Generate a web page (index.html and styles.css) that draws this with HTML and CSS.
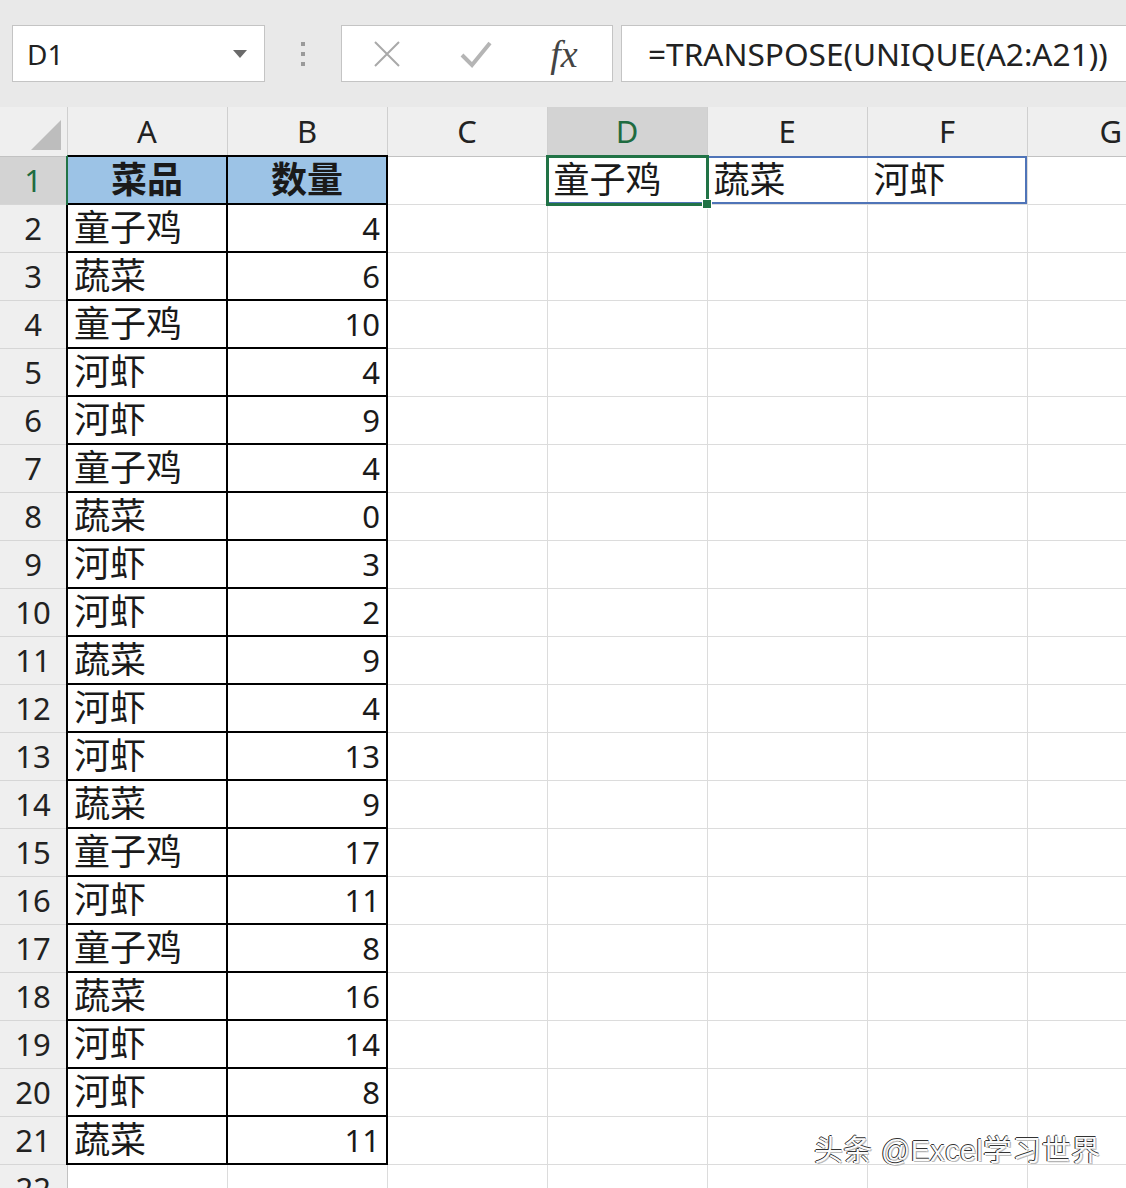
FILE: index.html
```html
<!DOCTYPE html>
<html lang="zh-CN">
<head>
    <meta charset="UTF-8">
    <title>TRANSPOSE UNIQUE</title>
    <link rel="stylesheet" href="styles.css">
</head>
<body>
<div class="toolbar">
    <div class="name-box">
        <span>D1</span>
        <span class="caret"></span>
    </div>
    <div class="grip"><i></i><i></i><i></i></div>
    <div class="fx-buttons">
        <svg class="btn-cancel" width="28" height="28" viewBox="0 0 28 28">
            <path d="M2 2 L26 26 M26 2 L2 26" stroke="#a9a9a9" stroke-width="2" fill="none"/>
        </svg>
        <svg class="btn-enter" width="32" height="28" viewBox="0 0 32 28">
            <path d="M2 15 L12 25 L30 3" stroke="#b5b5b5" stroke-width="4" fill="none"/>
        </svg>
        <span class="fx">fx</span>
    </div>
    <div class="formula">=TRANSPOSE(UNIQUE(A2:A21))</div>
</div>

<div class="sheet">
    <table class="grid">
        <colgroup>
            <col class="col-head">
            <col class="col"><col class="col"><col class="col">
            <col class="col"><col class="col"><col class="col">
            <col class="col-last">
        </colgroup>
        <thead>
        <tr>
            <th class="corner"><span class="corner-tri"></span></th>
            <th>A</th><th>B</th><th>C</th>
            <th class="active">D</th><th>E</th><th>F</th><th class="last">G</th>
        </tr>
        </thead>
        <tbody id="rows">
        <tr>
            <th class="row-no active">1</th>
            <td class="data title">菜品</td>
            <td class="data title">数量</td>
            <td></td>
            <td class="pick">
                <div class="spill"></div>
                <div class="cursor"><span class="handle"></span></div>
                童子鸡
            </td>
            <td class="spilled">蔬菜</td>
            <td class="spilled">河虾</td>
            <td></td>
        </tr>
        </tbody>
    </table>
    <div class="watermark">头条 @Excel学习世界</div>
</div>

<script>
    // 原始数据 A2:B21
    const rows = [
        ['童子鸡', 4], ['蔬菜', 6], ['童子鸡', 10], ['河虾', 4], ['河虾', 9],
        ['童子鸡', 4], ['蔬菜', 0], ['河虾', 3], ['河虾', 2], ['蔬菜', 9],
        ['河虾', 4], ['河虾', 13], ['蔬菜', 9], ['童子鸡', 17], ['河虾', 11],
        ['童子鸡', 8], ['蔬菜', 16], ['河虾', 14], ['河虾', 8], ['蔬菜', 11]
    ];

    const body = document.getElementById('rows');
    let html = '';
    rows.forEach((r, i) => {
        html += `<tr><th class="row-no">${i + 2}</th>` +
            `<td class="data">${r[0]}</td><td class="data num">${r[1]}</td>` +
            '<td></td><td></td><td></td><td></td><td></td></tr>';
    });
    // 第22行只露出一半
    html += '<tr><th class="row-no">22</th><td></td><td></td><td></td><td></td><td></td><td></td><td></td></tr>';
    body.insertAdjacentHTML('beforeend', html);
</script>
</body>
</html>
```

FILE: styles.css
```css
html, body {
    margin: 0;
    padding: 0;
}
body {
    width: 1126px;
    height: 1188px;
    overflow: hidden;
    background: #fff;
    font-family: "Noto Sans", "Noto Sans CJK SC", sans-serif;
    color: #1a1a1a;
}

/* 编辑栏 */
.toolbar {
    height: 107px;
    box-sizing: border-box;
    padding: 25px 0 0 12px;
    display: flex;
    align-items: flex-start;
    background: #e9e9e9;
}
.name-box {
    width: 253px;
    height: 57px;
    box-sizing: border-box;
    background: #fff;
    border: 1px solid #c4c4c4;
    display: flex;
    align-items: center;
    justify-content: space-between;
    padding: 0 17px 0 14px;
    font-size: 28px;
    color: #222;
}
.caret {
    width: 0;
    height: 0;
    border-left: 7px solid transparent;
    border-right: 7px solid transparent;
    border-top: 8px solid #6a6a6a;
}
.grip {
    width: 76px;
    height: 57px;
    display: flex;
    flex-direction: column;
    align-items: center;
    justify-content: center;
    gap: 6px;
}
.grip i {
    display: block;
    width: 4px;
    height: 4px;
    background: #9a9a9a;
}
.fx-buttons {
    width: 272px;
    height: 57px;
    box-sizing: border-box;
    background: #fff;
    border: 1px solid #c4c4c4;
    display: grid;
    grid-template-columns: 88px 92px 1fr;
    align-items: center;
    justify-items: center;
}
.fx-buttons .btn-cancel {
    margin-left: 2px;
}
.fx {
    font-family: "Liberation Serif", serif;
    font-style: italic;
    font-size: 38px;
    color: #444;
    line-height: 1;
    margin-left: -6px;
}
.formula {
    flex: 1;
    height: 57px;
    margin-left: 8px;
    margin-right: -4px;
    box-sizing: border-box;
    background: #fff;
    border: 1px solid #c4c4c4;
    padding-left: 26px;
    display: flex;
    align-items: center;
    font-size: 31.6px;
    color: #222;
    white-space: nowrap;
}

/* 表格区域 */
.sheet {
    position: relative;
}
.grid {
    border-collapse: collapse;
    table-layout: fixed;
    width: 1126px;
}
.col-head { width: 67px; }
.col { width: 160px; }
.col-last { width: 99px; }

.grid thead th {
    height: 47px;
    padding: 0;
    background: #efefef;
    border-left: 1px solid #cfcfcf;
    border-right: 1px solid #cfcfcf;
    border-bottom: 1px solid #c2c2c2;
    font-weight: normal;
    font-size: 31px;
    color: #222;
    text-align: center;
    vertical-align: top;
    line-height: 48px;
}
.grid thead th.last {
    text-align: right;
    padding-right: 4px;
    border-right: none;
}
.grid thead th.active {
    background: #d3d3d3;
    color: #1f6b40;
}
.grid thead th.corner {
    border-left: none;
    position: relative;
}
.corner-tri {
    position: absolute;
    right: 6px;
    bottom: 6px;
    width: 0;
    height: 0;
    border-left: 30px solid transparent;
    border-bottom: 30px solid #bdbdbd;
}

.grid tbody tr {
    height: 48px;
}
.grid tbody th.row-no {
    padding: 0;
    background: #efefef;
    border-right: 1px solid #c2c2c2;
    border-bottom: 1px solid #d6d6d6;
    font-weight: normal;
    font-size: 31px;
    color: #222;
    text-align: center;
}
.grid tbody th.row-no.active {
    background: #d3d3d3;
    color: #1f6b40;
    border-right: 2px solid #217346;
}
.grid td {
    padding: 0 6px 0 6px;
    border: 1px solid #dcdcdc;
    font-size: 36px;
    line-height: 46px;
    white-space: nowrap;
    overflow: visible;
}
.grid td.data {
    border: 2px solid #000;
}
.grid td.num {
    text-align: right;
    font-size: 31px;
}
.grid td.title {
    background: #9cc3e6;
    font-weight: bold;
    text-align: center;
}

/* 选中单元格与溢出区域 */
.grid td.pick {
    position: relative;
}
.spill {
    position: absolute;
    left: -1px;
    top: -1px;
    width: 480px;
    height: 48px;
    box-sizing: border-box;
    border: 2px solid #4f74b8;
}
.cursor {
    position: absolute;
    left: -2px;
    top: -2px;
    width: 163px;
    height: 51px;
    box-sizing: border-box;
    border: 3px solid #217346;
}
.handle {
    position: absolute;
    right: -6px;
    bottom: -6px;
    width: 8px;
    height: 8px;
    background: #217346;
    border: 1px solid #fff;
}

.watermark {
    position: absolute;
    left: 814px;
    top: 1020px;
    font-family: "Liberation Sans", "Noto Sans CJK SC", sans-serif;
    font-size: 29px;
    letter-spacing: 0.3px;
    color: #fbfbfb;
    text-shadow: -1px 0 0 #222, 0 -1px 0 #333, 1px 1px 0 #bbb;
    white-space: nowrap;
}
```
